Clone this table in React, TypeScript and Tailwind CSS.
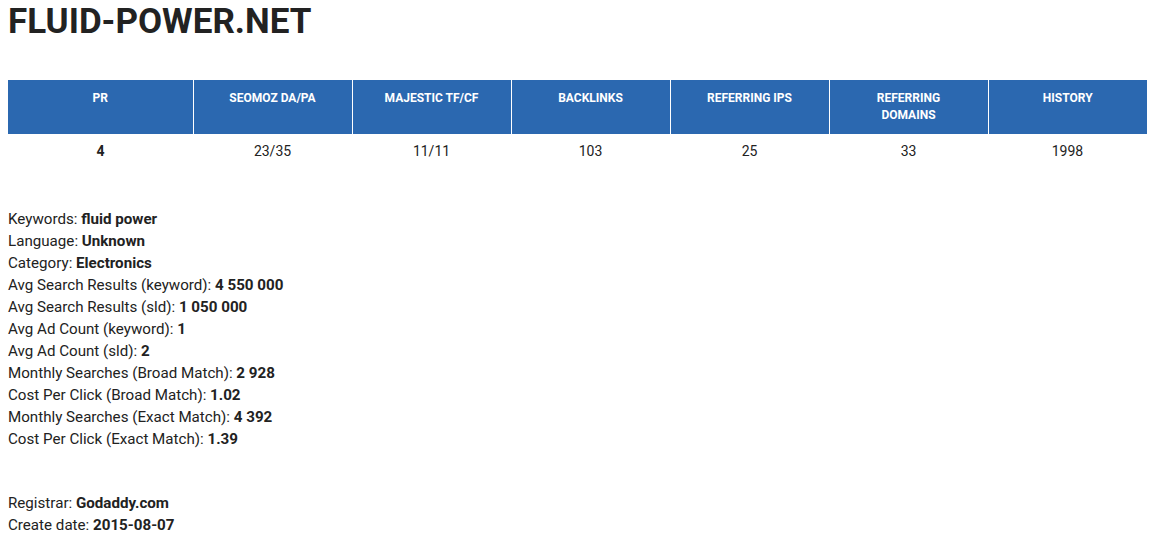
import React from 'react';

const headers = ['PR', 'SEOMOZ DA/PA', 'MAJESTIC TF/CF', 'BACKLINKS', 'REFERRING IPS', 'REFERRING DOMAINS', 'HISTORY'];
const values = ['4', '23/35', '11/11', '103', '25', '33', '1998'];

const stats: [string, string][] = [
  ['Keywords', 'fluid power'],
  ['Language', 'Unknown'],
  ['Category', 'Electronics'],
  ['Avg Search Results (keyword)', '4 550 000'],
  ['Avg Search Results (sld)', '1 050 000'],
  ['Avg Ad Count (keyword)', '1'],
  ['Avg Ad Count (sld)', '2'],
  ['Monthly Searches (Broad Match)', '2 928'],
  ['Cost Per Click (Broad Match)', '1.02'],
  ['Monthly Searches (Exact Match)', '4 392'],
  ['Cost Per Click (Exact Match)', '1.39'],
];

const whois: [string, string][] = [
  ['Registrar', 'Godaddy.com'],
  ['Create date', '2015-08-07'],
];

function Line({ label, value }: { label: string; value: string }) {
  return (
    <div>
      {label}: <b className="font-bold">{value}</b>
    </div>
  );
}

export default function App() {
  return (
    <div className="min-h-[537px] bg-white px-2 text-[15.15px] leading-[22px] text-[#222] font-['Roboto',sans-serif]">
      <h1 className="pt-[1px] text-[35px] leading-[42px] font-bold text-[#222]">FLUID-POWER.NET</h1>

      {/* Metrics table */}
      <table className="mt-[37px] w-[1139px] table-fixed border-collapse">
        <thead>
          <tr>
            {headers.map((h, i) => (
              <th
                key={h}
                className={`${i === 0 ? 'w-[185px]' : ''} h-[54px] border-l border-white bg-[#2b68b0] px-5 pt-[10px] pb-[10px] align-top text-[12px] leading-[17px] font-bold text-white first:border-l-0`}
              >
                {h}
              </th>
            ))}
          </tr>
        </thead>
        <tbody>
          <tr>
            {values.map((v, i) => (
              <td key={i} className={`px-2 pt-[7px] pb-[9px] text-center text-[14px] leading-[20px] ${i === 0 ? 'font-bold' : ''}`}>
                {v}
              </td>
            ))}
          </tr>
        </tbody>
      </table>

      <div className="mt-[38px]">
        {stats.map(([l, v]) => (
          <Line key={l} label={l} value={v} />
        ))}
      </div>

      <div className="mt-[42px]">
        {whois.map(([l, v]) => (
          <Line key={l} label={l} value={v} />
        ))}
      </div>
    </div>
  );
}
